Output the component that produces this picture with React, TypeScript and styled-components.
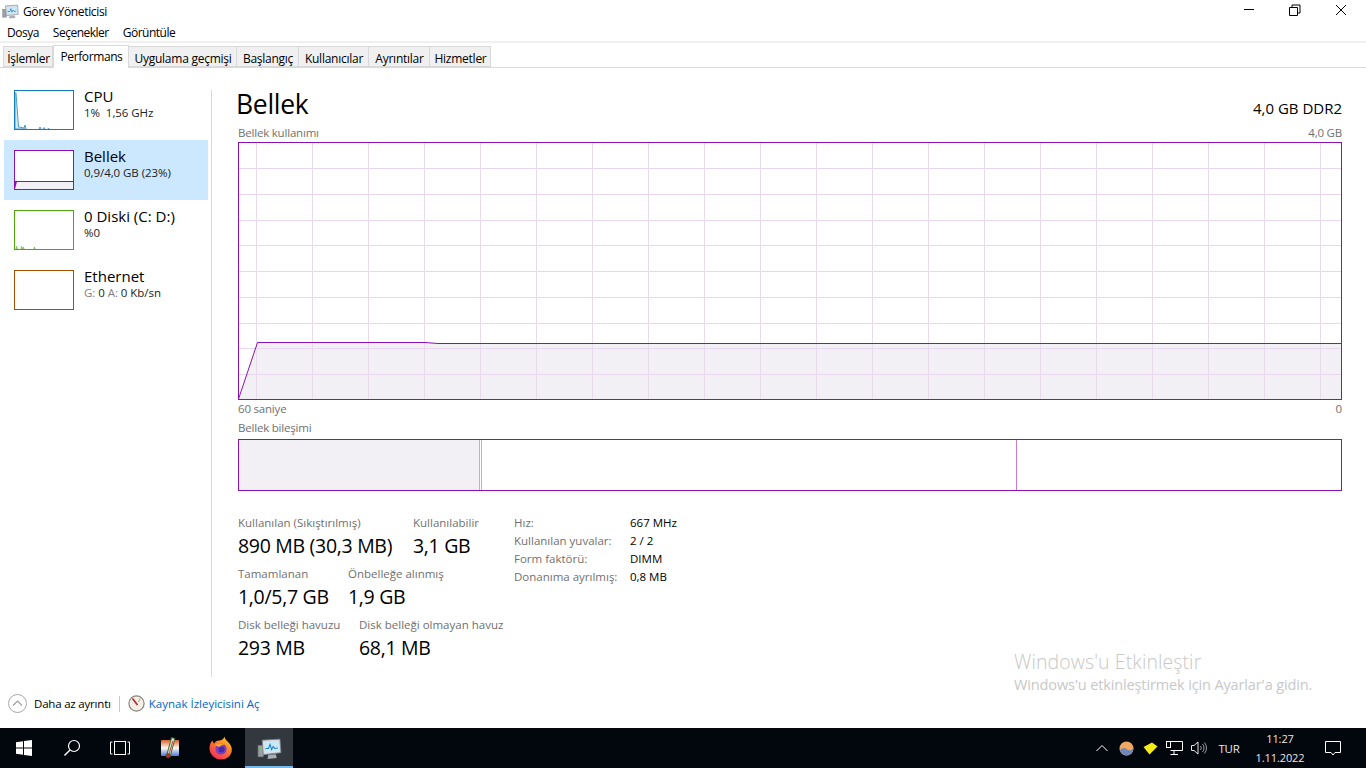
import React from 'react';
import styled, { createGlobalStyle } from 'styled-components';

const GlobalStyle = createGlobalStyle`
  html, body { margin: 0; padding: 0; background: #fff; }
  body { font-family: "Open Sans", "Noto Sans", "Liberation Sans", sans-serif; color: #000; overflow: hidden; }
`;

const Root = styled.div`
  position: relative;
  width: 1366px;
  height: 768px;
  display: flex;
  flex-direction: column;
  overflow: hidden;
  background: #fff;
`;

const TitleBar = styled.div`
  height: 22px;
  flex: none;
  display: flex;
  align-items: center;
  padding-left: 2px;
  font-size: 12px;
  letter-spacing: -0.35px;
`;

const TitleText = styled.span`
  margin-left: 4px;
  flex: 1;
`;

const WinButtons = styled.div`
  display: flex;
  align-items: center;
  padding-right: 2px;
`;

const WinButton = styled.div`
  width: 46px;
  height: 20px;
  margin-bottom: 2px;
  display: flex;
  align-items: center;
  justify-content: center;
`;

const MenuBar = styled.div`
  height: 21px;
  flex: none;
  box-sizing: border-box;
  display: flex;
  align-items: center;
  gap: 14px;
  padding: 1px 0 0 7px;
  font-size: 12px;
  letter-spacing: -0.5px;
  border-bottom: 2px solid #f0f0f0;
`;

const Tabs = styled.div`
  height: 25px;
  flex: none;
  box-sizing: border-box;
  display: flex;
  align-items: flex-end;
  padding-left: 3px;
  border-bottom: 1px solid #d9d9d9;
`;

const Tab = styled.div<{ $active?: boolean; $w: number }>`
  width: ${(p) => p.$w}px;
  box-sizing: border-box;
  height: ${(p) => (p.$active ? 23 : 21)}px;
  margin-bottom: ${(p) => (p.$active ? -1 : 0)}px;
  display: flex;
  align-items: center;
  justify-content: center;
  font-size: 12px;
  letter-spacing: ${(p) => (p.$active ? -0.4 : -0.25)}px;
  background: ${(p) => (p.$active ? '#fff' : '#f0f0f0')};
  border: 1px solid #d9d9d9;
  border-bottom: ${(p) => (p.$active ? 'none' : '1px solid #d9d9d9')};
  border-left: ${(p) => (p.$active ? '1px solid #d9d9d9' : 'none')};
  padding: ${(p) => (p.$active ? '0 0 1px 1px' : '4px 0 0 1px')};
  &:first-child { border-left: 1px solid #d9d9d9; }
`;

const Body = styled.div`
  flex: 1;
  display: flex;
  min-height: 0;
`;

const Sidebar = styled.div`
  width: 208px;
  box-sizing: border-box;
  padding: 12px 0 0 4px;
  display: flex;
  flex-direction: column;
`;

const SideItem = styled.div<{ $active?: boolean }>`
  width: 204px;
  height: 60px;
  box-sizing: border-box;
  padding: 10px 0 0 10px;
  display: flex;
  gap: 10px;
  background: ${(p) => (p.$active ? '#cce8ff' : 'transparent')};
`;

const Thumb = styled.div<{ $color: string }>`
  width: 60px;
  height: 40px;
  box-sizing: border-box;
  border: 1px solid ${(p) => p.$color};
  background: #fff;
  flex: none;
  svg { display: block; }
`;

const SideText = styled.div`
  display: flex;
  flex-direction: column;
  margin-top: -4px;
`;

const SideName = styled.div`
  font-size: 15px;
  line-height: 20px;
`;

const SideSub = styled.div`
  font-size: 11.5px;
  line-height: 14px;
  letter-spacing: -0.05px;
  color: #222;
`;

const Muted = styled.span`
  color: #808080;
`;

const Divider = styled.div`
  width: 1px;
  height: 587px;
  margin: 22px 0 0 3px;
  background: #d9d9d9;
`;

const Main = styled.div`
  width: 1104px;
  margin-left: 26px;
  padding-top: 20px;
  display: flex;
  flex-direction: column;
`;

const Head = styled.div`
  display: flex;
  justify-content: space-between;
  align-items: flex-end;
  height: 37px;
`;

const Heading = styled.div`
  font-size: 26.5px;
  line-height: 37px;
  margin: -2px 0 0 -2px;
  height: 37px;
  letter-spacing: -0.3px;
  align-self: flex-start;
`;

const HeadRight = styled.div`
  font-size: 15px;
  line-height: 20px;
  margin-bottom: 7px;
`;

const Caption = styled.div<{ $h: number; $pad?: number }>`
  height: ${(p) => p.$h}px;
  box-sizing: border-box;
  padding-bottom: ${(p) => p.$pad ?? 2}px;
  display: flex;
  align-items: center;
  justify-content: space-between;
  font-size: 11.5px;
  letter-spacing: -0.2px;
  color: #707070;
`;

const Chart = styled.div`
  height: 258px;
  svg { display: block; }
`;

const CompBar = styled.div`
  height: 52px;
  box-sizing: border-box;
  display: flex;
  border: 1px solid #8b12ae;
`;

const CompSeg = styled.div<{ $w?: number; $fill?: boolean; $edge?: string }>`
  ${(p) => (p.$w ? `width: ${p.$w}px;` : 'flex: 1;')}
  box-sizing: border-box;
  background: ${(p) => (p.$fill ? '#f2f0f4' : '#fff')};
  border-right: ${(p) => (p.$edge ? `1px solid ${p.$edge}` : 'none')};
`;

const Details = styled.div`
  display: flex;
  margin-top: 24px;
`;

const StatBlock = styled.div`
  width: 276px;
  display: flex;
  flex-direction: column;
`;

const StatRow = styled.div`
  height: 51px;
  display: flex;
`;

const Stat = styled.div<{ $w: number }>`
  width: ${(p) => p.$w}px;
  flex: none;
  white-space: nowrap;
`;

const StatLabel = styled.div`
  font-size: 11.5px;
  line-height: 16px;
  color: #707070;
`;

const StatValue = styled.div`
  font-size: 19.5px;
  line-height: 29px;
  letter-spacing: -0.3px;
`;

const Specs = styled.div`
  display: grid;
  grid-template-columns: 116px auto;
  grid-auto-rows: 18px;
  align-content: start;
  font-size: 11.5px;
  line-height: 16px;
`;

const SpecKey = styled.div`
  color: #707070;
`;

const SpecVal = styled.div`
  color: #000;
`;

const Footer = styled.div`
  height: 51px;
  flex: none;
  display: flex;
  align-items: center;
  padding: 2px 0 0 8px;
  box-sizing: border-box;
  font-size: 11.5px;
`;

const FooterLabel = styled.span`
  margin-left: 7px;
  letter-spacing: -0.2px;
`;

const FooterSep = styled.div`
  width: 1px;
  height: 16px;
  background: #c8c8c8;
  margin: 0 8px;
`;

const FooterLink = styled.span`
  color: #0066cc;
  margin-left: 4px;
`;

const Taskbar = styled.div`
  height: 40px;
  flex: none;
  display: flex;
  align-items: stretch;
  background: #02060d;
  color: #fff;
`;

const TaskButton = styled.div<{ $w: number; $active?: boolean }>`
  width: ${(p) => p.$w}px;
  box-sizing: border-box;
  display: flex;
  align-items: center;
  justify-content: center;
  background: ${(p) => (p.$active ? '#33383e' : 'transparent')};
  border-bottom: 2px solid ${(p) => (p.$active ? '#76b9ed' : 'transparent')};
  border-top: 2px solid transparent;
`;

const Tray = styled.div`
  margin-left: auto;
  display: flex;
  align-items: center;
  color: #e8e8e8;
`;

const TrayIcon = styled.div<{ $w: number }>`
  width: ${(p) => p.$w}px;
  display: flex;
  justify-content: center;
  align-items: center;
`;

const Lang = styled.div`
  width: 36px;
  text-align: center;
  font-size: 11.5px;
  letter-spacing: -0.3px;
`;

const Clock = styled.div`
  width: 66px;
  text-align: center;
  font-size: 11px;
  line-height: 19px;
  letter-spacing: -0.1px;
`;

const Watermark = styled.div`
  position: absolute;
  left: 1014px;
  top: 648px;
  color: #c8c8c8;
  white-space: nowrap;
`;

const WatermarkTitle = styled.div`
  font-size: 19.5px;
  font-weight: 300;
  line-height: 27px;
  letter-spacing: 0.1px;
`;

const WatermarkSub = styled.div`
  font-size: 14.5px;
  line-height: 20px;
  letter-spacing: -0.13px;
`;

const tabs = [
  { label: 'İşlemler', w: 50 },
  { label: 'Performans', w: 76, active: true },
  { label: 'Uygulama geçmişi', w: 108 },
  { label: 'Başlangıç', w: 62 },
  { label: 'Kullanıcılar', w: 70 },
  { label: 'Ayrıntılar', w: 61 },
  { label: 'Hizmetler', w: 61 },
];

const PURPLE = '#8b12ae';

const TaskManagerIcon = ({ size }: { size: number }) => (
  <svg width={size} height={size} viewBox="0 0 24 24">
    <rect x="1" y="9" width="5" height="11" fill="#9aa0a6" stroke="#70767c" strokeWidth="0.6" />
    <rect x="2" y="11" width="3" height="1.5" fill="#6fbf4a" />
    <path d="M5 4 L22 3 L23 16 L6 18 Z" fill="#d5dde4" stroke="#7a8188" strokeWidth="0.8" />
    <path d="M7 6 L20.5 5.2 L21.3 14.8 L7.8 16 Z" fill="#c9e9f8" />
    <path d="M8 12 L11 12 L12.5 8 L14 13 L15.5 10 L17 12 L20 11.5" fill="none" stroke="#1f7fc4" strokeWidth="1" />
    <path d="M11 18 L18 17.5 L19 21 L10 22 Z" fill="#a9afb5" />
  </svg>
);

const FirefoxIcon = () => (
  <svg width="24" height="24" viewBox="0 0 24 24">
    <defs>
      <linearGradient id="ffx" x1="0.85" y1="0" x2="0.2" y2="1">
        <stop offset="0" stopColor="#ffd01f" />
        <stop offset="0.45" stopColor="#ff7a2a" />
        <stop offset="1" stopColor="#f2285f" />
      </linearGradient>
    </defs>
    <path d="M15.5 0.5 C16 4 18.5 5 20.5 7.5 C23 10.5 23.5 14.5 22 17.5 C20 21.5 16.5 23.5 12 23.5 C6 23.5 0.5 18.5 0.5 12.5 C0.5 9 1.5 6.5 3.5 4.5 C3.8 6 4.3 7 5.2 7.5 C6.2 5.5 8 4.5 10 4.5 C12.5 4.5 14.8 3.2 15.5 0.5 Z" fill="url(#ffx)" />
    <circle cx="12" cy="13" r="5.6" fill="#7b3fc6" />
    <circle cx="12.5" cy="13.5" r="3" fill="#4a2aa0" />
    <path d="M6.5 9 C9 7 13 7 15.5 8.5 C13.5 8.5 11.5 9.5 10.5 11 C9 10.5 7.5 10 6.5 9 Z" fill="#ffa52a" />
  </svg>
);

const ThermoIcon = () => (
  <svg width="20" height="22" viewBox="0 0 20 22">
    <defs>
      <linearGradient id="thermoBg" x1="0" y1="0" x2="0" y2="1">
        <stop offset="0" stopColor="#d9622a" />
        <stop offset="0.5" stopColor="#fbf8f2" />
        <stop offset="1" stopColor="#4f78d6" />
      </linearGradient>
    </defs>
    <rect x="1" y="3" width="18" height="16" rx="1" fill="url(#thermoBg)" />
    <path d="M11.5 0.5 L15 1.5 L10 20 L6.5 19 Z" fill="#cfdcbc" stroke="#3e5a30" strokeWidth="0.9" />
    <path d="M12.5 4 L13.2 4.2 L9.2 18 L8.5 17.8 Z" fill="#c1272d" />
    <circle cx="8" cy="18.6" r="2.2" fill="#c1272d" stroke="#3e5a30" strokeWidth="0.7" />
  </svg>
);

const GaugeIcon = () => (
  <svg width="17" height="17" viewBox="0 0 17 17">
    <circle cx="8.5" cy="8.5" r="7.6" fill="#f3efe6" stroke="#8a8578" strokeWidth="1.2" />
    <path d="M4.5 3.5 L9.5 10" stroke="#b3262b" strokeWidth="1.6" />
    <path d="M12 3.5 L10.5 7" stroke="#a9a294" strokeWidth="1" />
  </svg>
);

const gridX = Array.from({ length: 20 }, (_, i) => 18.5 + i * 56);
const gridY = Array.from({ length: 9 }, (_, i) => 26.2 + i * 25.72);

const UsageChart = () => (
  <svg width="1104" height="258" viewBox="0 0 1104 258">
    <rect x="0" y="0" width="1104" height="258" fill="#fff" />
    <path d="M0.5 257 L19.5 200.5 L187 200.5 L205 201.5 L1103 201.5 L1103 257 Z" fill="#f2f0f4" />
    {gridY.map((y) => (
      <line key={y} x1="0" x2="1104" y1={Math.round(y) + 0.5} y2={Math.round(y) + 0.5} stroke="#e9d7ef" strokeWidth="1" />
    ))}
    {gridX.map((x) => (
      <line key={x} x1={x} x2={x} y1="0" y2="258" stroke="#e8dcec" strokeWidth="1" />
    ))}
    <path d="M0.5 257 L19.5 200.5 L187 200.5 L200 201.5 L1103 201.5" fill="none" stroke={PURPLE} strokeWidth="1" />
    <rect x="0.5" y="0.5" width="1103" height="257" fill="none" stroke={PURPLE} strokeWidth="1" />
  </svg>
);

export default function App() {
  return (
    <Root>
      <GlobalStyle />
      <TitleBar>
        <TaskManagerIcon size={17} />
        <TitleText>Görev Yöneticisi</TitleText>
        <WinButtons>
          <WinButton>
            <svg width="12" height="12" viewBox="0 0 12 12"><path d="M1 5.5H11" stroke="#000" /></svg>
          </WinButton>
          <WinButton>
            <svg width="12" height="12" viewBox="0 0 12 12"><path d="M0.5 3.5H8.5V11.5H0.5Z M3 3.5V1H11V9H8.5" fill="none" stroke="#000" /></svg>
          </WinButton>
          <WinButton>
            <svg width="12" height="12" viewBox="0 0 12 12"><path d="M1 1L11 11M11 1L1 11" stroke="#000" /></svg>
          </WinButton>
        </WinButtons>
      </TitleBar>
      <MenuBar>
        <span>Dosya</span>
        <span>Seçenekler</span>
        <span>Görüntüle</span>
      </MenuBar>
      <Tabs>
        {tabs.map((t) => (
          <Tab key={t.label} $w={t.w} $active={t.active}>{t.label}</Tab>
        ))}
      </Tabs>
      <Body>
        <Sidebar>
          <SideItem>
            <Thumb $color="#117dbb">
              <svg width="58" height="38" viewBox="0 0 58 38">
                <path d="M0 38 L0 2 L1 2 L3.5 36 L9 37 L10 34 L11 38 Z" fill="#d9eaf5" stroke="#4a9bcb" strokeWidth="1" />
                <path d="M24 38 L25 36 L26 38 M28 38 L29 36.5 L30 38 M33 38 L33.5 37 L34 38" fill="none" stroke="#4a9bcb" />
              </svg>
            </Thumb>
            <SideText>
              <SideName>CPU</SideName>
              <SideSub>1%&nbsp; 1,56 GHz</SideSub>
            </SideText>
          </SideItem>
          <SideItem $active>
            <Thumb $color={PURPLE}>
              <svg width="58" height="38" viewBox="0 0 58 38">
                <rect x="0" y="30" width="58" height="8" fill="#f2f0f4" />
                <path d="M0 38 L0 30.5 L2 30.5 Z" fill={PURPLE} />
                <path d="M0 30.5 H58" stroke={PURPLE} />
              </svg>
            </Thumb>
            <SideText>
              <SideName>Bellek</SideName>
              <SideSub>0,9/4,0 GB (23%)</SideSub>
            </SideText>
          </SideItem>
          <SideItem>
            <Thumb $color="#4da60c">
              <svg width="58" height="38" viewBox="0 0 58 38">
                <path d="M1 38 L1.5 35.5 L2.5 38 M6 38 L6.5 35.5 L7.5 38 M8 38 L8.5 36 L9 38 M19 38 L19.5 36 L20 38" fill="#cfe7bc" stroke="#7dbe52" />
              </svg>
            </Thumb>
            <SideText>
              <SideName>0 Diski (C: D:)</SideName>
              <SideSub>%0</SideSub>
            </SideText>
          </SideItem>
          <SideItem>
            <Thumb $color="#a74f01" />
            <SideText>
              <SideName>Ethernet</SideName>
              <SideSub><Muted>G:</Muted> 0 <Muted>A:</Muted> 0 Kb/sn</SideSub>
            </SideText>
          </SideItem>
        </Sidebar>
        <Divider />
        <Main>
          <Head>
            <Heading>Bellek</Heading>
            <HeadRight>4,0 GB DDR2</HeadRight>
          </Head>
          <Caption $h={17}>
            <span>Bellek kullanımı</span>
            <span>4,0 GB</span>
          </Caption>
          <Chart><UsageChart /></Chart>
          <Caption $h={19}>
            <span>60 saniye</span>
            <span>0</span>
          </Caption>
          <Caption $h={20} $pad={4}>
            <span>Bellek bileşimi</span>
          </Caption>
          <CompBar>
            <CompSeg $w={241} $fill $edge="#c9a8d6" />
            <CompSeg $w={2} $edge="#c9a8d6" />
            <CompSeg $w={535} $edge="#c47fd8" />
            <CompSeg />
          </CompBar>
          <Details>
            <StatBlock>
              <StatRow>
                <Stat $w={175}>
                  <StatLabel>Kullanılan (Sıkıştırılmış)</StatLabel>
                  <StatValue>890 MB (30,3 MB)</StatValue>
                </Stat>
                <Stat $w={90}>
                  <StatLabel>Kullanılabilir</StatLabel>
                  <StatValue>3,1 GB</StatValue>
                </Stat>
              </StatRow>
              <StatRow>
                <Stat $w={110}>
                  <StatLabel>Tamamlanan</StatLabel>
                  <StatValue>1,0/5,7 GB</StatValue>
                </Stat>
                <Stat $w={110}>
                  <StatLabel>Önbelleğe alınmış</StatLabel>
                  <StatValue>1,9 GB</StatValue>
                </Stat>
              </StatRow>
              <StatRow>
                <Stat $w={121}>
                  <StatLabel>Disk belleği havuzu</StatLabel>
                  <StatValue>293 MB</StatValue>
                </Stat>
                <Stat $w={150}>
                  <StatLabel>Disk belleği olmayan havuz</StatLabel>
                  <StatValue>68,1 MB</StatValue>
                </Stat>
              </StatRow>
            </StatBlock>
            <Specs>
              <SpecKey>Hız:</SpecKey><SpecVal>667 MHz</SpecVal>
              <SpecKey>Kullanılan yuvalar:</SpecKey><SpecVal>2 / 2</SpecVal>
              <SpecKey>Form faktörü:</SpecKey><SpecVal>DIMM</SpecVal>
              <SpecKey>Donanıma ayrılmış:</SpecKey><SpecVal>0,8 MB</SpecVal>
            </Specs>
          </Details>
        </Main>
      </Body>
      <Footer>
        <svg width="19" height="19" viewBox="0 0 19 19">
          <circle cx="9.5" cy="9.5" r="9" fill="#fff" stroke="#a8a8a8" />
          <path d="M5 11.5 L9.5 7 L14 11.5" fill="none" stroke="#a0a0a0" strokeWidth="1.2" />
        </svg>
        <FooterLabel>Daha az ayrıntı</FooterLabel>
        <FooterSep />
        <GaugeIcon />
        <FooterLink>Kaynak İzleyicisini Aç</FooterLink>
      </Footer>
      <Taskbar>
        <TaskButton $w={48}>
          <svg width="16" height="16" viewBox="0 0 16 16">
            <path d="M0 2.2 L7 1.2 V7.5 H0 Z M8 1.1 L16 0 V7.5 H8 Z M0 8.5 H7 V14.8 L0 13.8 Z M8 8.5 H16 V16 L8 14.9 Z" fill="#fff" />
          </svg>
        </TaskButton>
        <TaskButton $w={48}>
          <svg width="18" height="18" viewBox="0 0 18 18">
            <circle cx="11" cy="7" r="5.5" fill="none" stroke="#fff" strokeWidth="1.2" />
            <path d="M7 11 L1.5 16.5" stroke="#fff" strokeWidth="1.4" />
          </svg>
        </TaskButton>
        <TaskButton $w={48}>
          <svg width="20" height="14" viewBox="0 0 20 14">
            <path d="M2.5 1 H0.5 V13 H2.5 M17.5 1 H19.5 V13 H17.5" fill="none" stroke="#fff" />
            <rect x="4.5" y="0.5" width="11" height="13" fill="none" stroke="#fff" />
          </svg>
        </TaskButton>
        <TaskButton $w={52}><ThermoIcon /></TaskButton>
        <TaskButton $w={49}><FirefoxIcon /></TaskButton>
        <TaskButton $w={48} $active><TaskManagerIcon size={25} /></TaskButton>
        <Tray>
          <TrayIcon $w={24}>
            <svg width="12" height="8" viewBox="0 0 12 8"><path d="M0.5 7 L6 1.5 L11.5 7" fill="none" stroke="#fff" /></svg>
          </TrayIcon>
          <TrayIcon $w={24}>
            <svg width="15" height="15" viewBox="0 0 15 15">
              <circle cx="7.5" cy="7.5" r="7" fill="#f0a860" />
              <path d="M0.8 9.5 C3 6.5 6 6.5 7.5 8 C10 10 12 9.5 14.2 7.5 C14.5 11.5 11.5 14.5 7.5 14.5 C4.5 14.5 1.8 12.5 0.8 9.5 Z" fill="#7288b4" />
            </svg>
          </TrayIcon>
          <TrayIcon $w={24}>
            <svg width="15" height="13" viewBox="0 0 15 13"><path d="M0.5 5 L9 0.5 L14.5 4.5 L6.5 12.5 Z" fill="#f6ec1a" /></svg>
          </TrayIcon>
          <TrayIcon $w={25}>
            <svg width="17" height="15" viewBox="0 0 17 15">
              <path d="M4.5 0.5 H16.5 V9.5 H4.5 M8 9.5 V13.5 M4.5 13.5 H12" fill="none" stroke="#fff" />
              <rect x="0.5" y="0.5" width="4" height="6" fill="#02060d" stroke="#fff" />
            </svg>
          </TrayIcon>
          <TrayIcon $w={24}>
            <svg width="17" height="14" viewBox="0 0 17 14">
              <path d="M0.5 4.5 H3 L7 1 V13 L3 9.5 H0.5 Z" fill="none" stroke="#e8e8e8" />
              <path d="M9.5 5 A3 3 0 0 1 9.5 9 M11.5 3 A6 6 0 0 1 11.5 11 M13.5 1.5 A8.5 8.5 0 0 1 13.5 12.5" fill="none" stroke="#9a9a9a" />
            </svg>
          </TrayIcon>
          <Lang>TUR</Lang>
          <Clock>11:27<br />1.11.2022</Clock>
          <TrayIcon $w={40}>
            <svg width="16" height="15" viewBox="0 0 16 15">
              <path d="M0.5 0.5 H15.5 V11.5 H10 L8 14 L6 11.5 H0.5 Z" fill="none" stroke="#fff" />
            </svg>
          </TrayIcon>
          <TrayIcon $w={13} />
        </Tray>
      </Taskbar>
      <Watermark>
        <WatermarkTitle>Windows'u Etkinleştir</WatermarkTitle>
        <WatermarkSub>Windows'u etkinleştirmek için Ayarlar'a gidin.</WatermarkSub>
      </Watermark>
    </Root>
  );
}
